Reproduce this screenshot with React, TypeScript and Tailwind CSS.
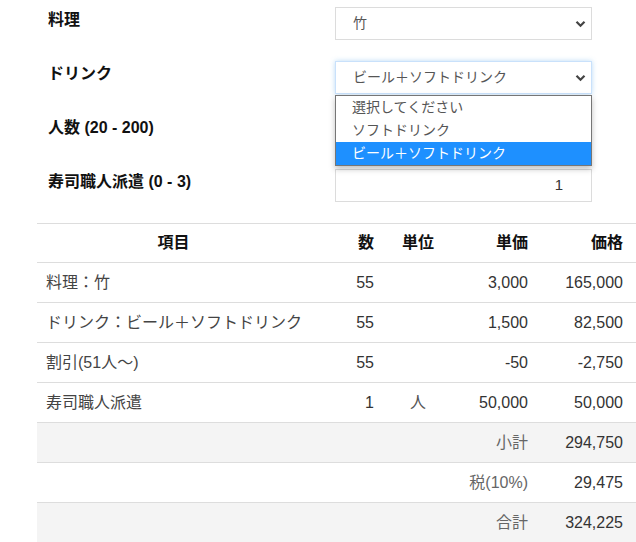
const font = { fontFamily: '"Liberation Sans", "Noto Sans CJK JP", sans-serif' }

type Line = { name: string; qty: string; unit: string; price: string; total: string }

const lines: Line[] = [
  { name: '料理：竹', qty: '55', unit: '', price: '3,000', total: '165,000' },
  { name: 'ドリンク：ビール＋ソフトドリンク', qty: '55', unit: '', price: '1,500', total: '82,500' },
  { name: '割引(51人〜)', qty: '55', unit: '', price: '-50', total: '-2,750' },
  { name: '寿司職人派遣', qty: '1', unit: '人', price: '50,000', total: '50,000' },
]

const summary = [
  { label: '小計', value: '294,750', gray: true },
  { label: '税(10%)', value: '29,475', gray: false },
  { label: '合計', value: '324,225', gray: true },
]

function Chevron() {
  return (
    <svg width="11" height="8" viewBox="0 0 11 8" className="absolute right-[5px] top-1/2 -translate-y-1/2">
      <path d="M1.5 1.8 L5.5 5.8 L9.5 1.8" fill="none" stroke="#444" strokeWidth="2.2" />
    </svg>
  )
}

function SelectBox({ value, focused }: { value: string; focused?: boolean }) {
  return (
    <div
      className={
        'relative h-[33px] w-[257px] bg-white border flex items-center pl-[17px] text-[14px] text-[#555] ' +
        (focused ? 'border-[#c9e1fb] shadow-[0_0_5px_rgba(102,175,233,0.45)]' : 'border-[#dcdcdc]')
      }
    >
      {value}
      <Chevron />
    </div>
  )
}

function InputBox({ value }: { value: string }) {
  return (
    <div className="h-[33px] w-[257px] bg-white border border-[#dcdcdc] flex items-center justify-end pr-[28px] text-[15px] text-[#333]">
      {value}
    </div>
  )
}

function FormRow({ label, children }: { label: string; children: React.ReactNode }) {
  return (
    <div className="flex h-[33px]">
      <div className="w-[287px] font-bold text-[16px] leading-[26px] text-[#111]">{label}</div>
      <div>{children}</div>
    </div>
  )
}

export default function App() {
  return (
    <div className="relative w-[636px] h-[542px] overflow-hidden bg-white" style={font}>
      <div className="pl-[48px] pt-[7px] flex flex-col gap-[21px]">
        <FormRow label="料理">
          <SelectBox value="竹" />
        </FormRow>
        <FormRow label="ドリンク">
          <SelectBox value="ビール＋ソフトドリンク" focused />
        </FormRow>
        <FormRow label="人数 (20 - 200)">
          <InputBox value="55" />
        </FormRow>
        <FormRow label="寿司職人派遣 (0 - 3)">
          <InputBox value="1" />
        </FormRow>
      </div>

      {/* open drink dropdown */}
      <div className="absolute left-[335px] top-[95px] w-[257px] bg-white border border-[#767676] shadow-[0_3px_6px_rgba(0,0,0,0.25)] text-[14px] text-[#555]">
        <div className="h-[23px] leading-[23px] pl-[16px]">選択してください</div>
        <div className="h-[23px] leading-[23px] pl-[16px]">ソフトドリンク</div>
        <div className="h-[23px] leading-[23px] pl-[16px] bg-[#1e90ff] text-white">ビール＋ソフトドリンク</div>
      </div>

      <table className="ml-[37px] mt-[21px] w-[599px] table-fixed border-collapse text-[16px] text-[#333]">
        <colgroup>
          <col className="w-[273px]" />
          <col className="w-[73px]" />
          <col className="w-[70px]" />
          <col className="w-[84px]" />
          <col className="w-[99px]" />
        </colgroup>
        <thead>
          <tr className="border-t border-[#dddddd] h-[39px] font-bold text-[#111]">
            <th className="text-center px-[9px]">項目</th>
            <th className="text-right px-[9px]">数</th>
            <th className="text-center px-[9px]">単位</th>
            <th className="text-right px-[9px]">単価</th>
            <th className="text-right pl-[9px] pr-[13px]">価格</th>
          </tr>
        </thead>
        <tbody>
          {lines.map((l) => (
            <tr key={l.name} className="border-t border-[#dddddd] h-[40px]">
              <td className="px-[9px] text-[#444] whitespace-nowrap">{l.name}</td>
              <td className="px-[9px] text-right">{l.qty}</td>
              <td className="px-[9px] text-center text-[#555]">{l.unit}</td>
              <td className="px-[9px] text-right">{l.price}</td>
              <td className="pl-[9px] pr-[13px] text-right">{l.total}</td>
            </tr>
          ))}
          {summary.map((s) => (
            <tr key={s.label} className={'border-t border-[#dddddd] h-[40px] ' + (s.gray ? 'bg-[#f4f4f4]' : 'bg-white')}>
              <td colSpan={3}></td>
              <td className="px-[9px] text-right text-[#666]">{s.label}</td>
              <td className="pl-[9px] pr-[13px] text-right">{s.value}</td>
            </tr>
          ))}
        </tbody>
      </table>
    </div>
  )
}
